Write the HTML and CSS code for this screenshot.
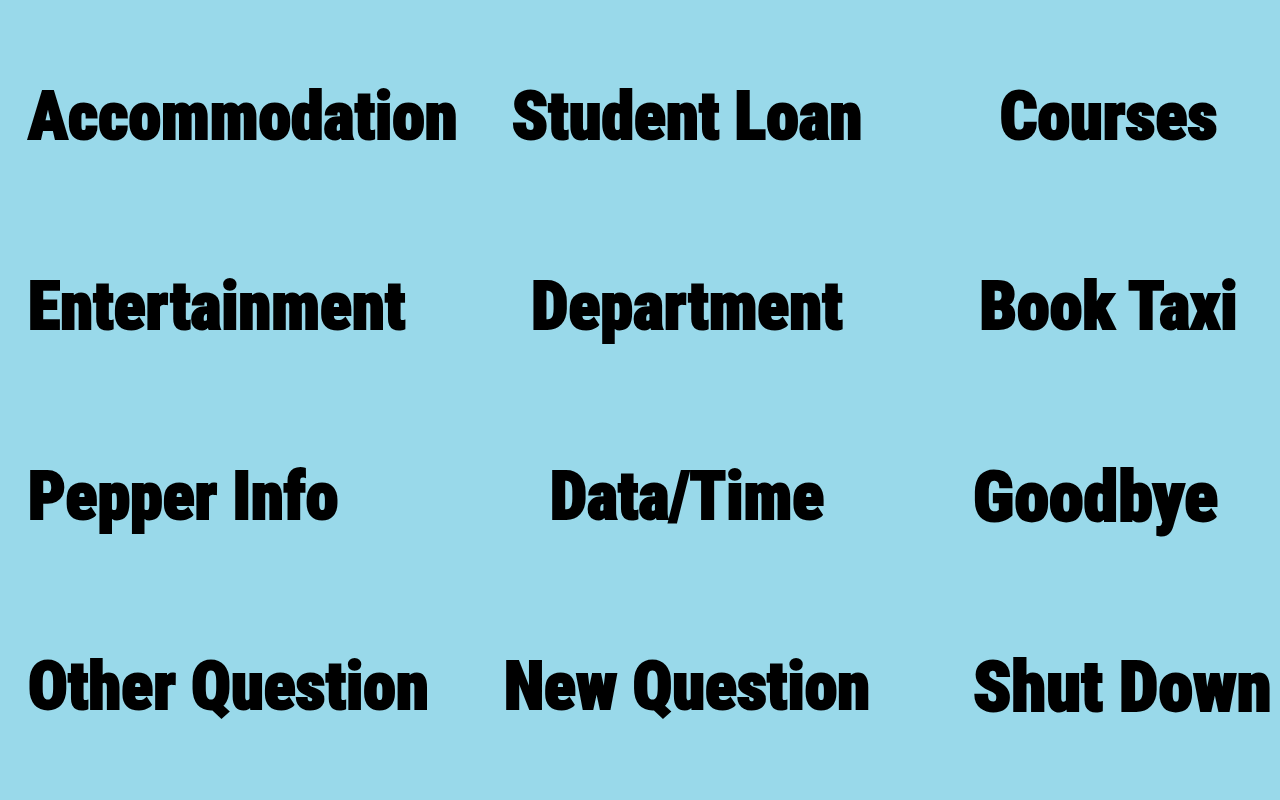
FILE: index.html
```html
<!DOCTYPE html>
<html lang="en">
<head>
<meta charset="utf-8">
<title>Pepper Menu</title>
<link rel="stylesheet" href="styles.css">
</head>
<body>
<main class="menu">
  <button class="option start" type="button">Accommodation</button>
  <button class="option" type="button">Student Loan</button>
  <button class="option last" type="button">Courses</button>
  <button class="option start" type="button">Entertainment</button>
  <button class="option" type="button">Department</button>
  <button class="option last" type="button">Book Taxi</button>
  <button class="option start" type="button">Pepper Info</button>
  <button class="option" type="button">Data/Time</button>
  <button class="option last start large" type="button">Goodbye</button>
  <button class="option start" type="button">Other Question</button>
  <button class="option" type="button">New Question</button>
  <button class="option last start large" type="button">Shut Down</button>
</main>
</body>
</html>
```
FILE: styles.css
```css
* {
  box-sizing: border-box;
}

body {
  margin: 0;
  background: #99d9ea;
}

.menu {
  display: grid;
  grid-template-columns: 429fr 412fr 351fr;
  grid-auto-rows: 1fr;
  column-gap: 24px;
  min-height: 100vh;
  padding: 22px 12px 18px 28px;
}

.option {
  display: flex;
  align-items: center;
  justify-content: center;
  min-width: 0;
  padding: 0;
  border: 0;
  background: transparent;
  color: #000;
  font-family: Impact, "Roboto Condensed", "Liberation Sans Narrow", "Liberation Sans", sans-serif;
  font-size: 66px;
  font-weight: 900;
  line-height: 80px;
  white-space: nowrap;
  cursor: pointer;
  -webkit-text-stroke: 2px #000;
}

.last {
  padding-left: 56px;
  padding-right: 24px;
}

.start {
  justify-content: flex-start;
}

.large {
  font-size: 70px;
}
```
